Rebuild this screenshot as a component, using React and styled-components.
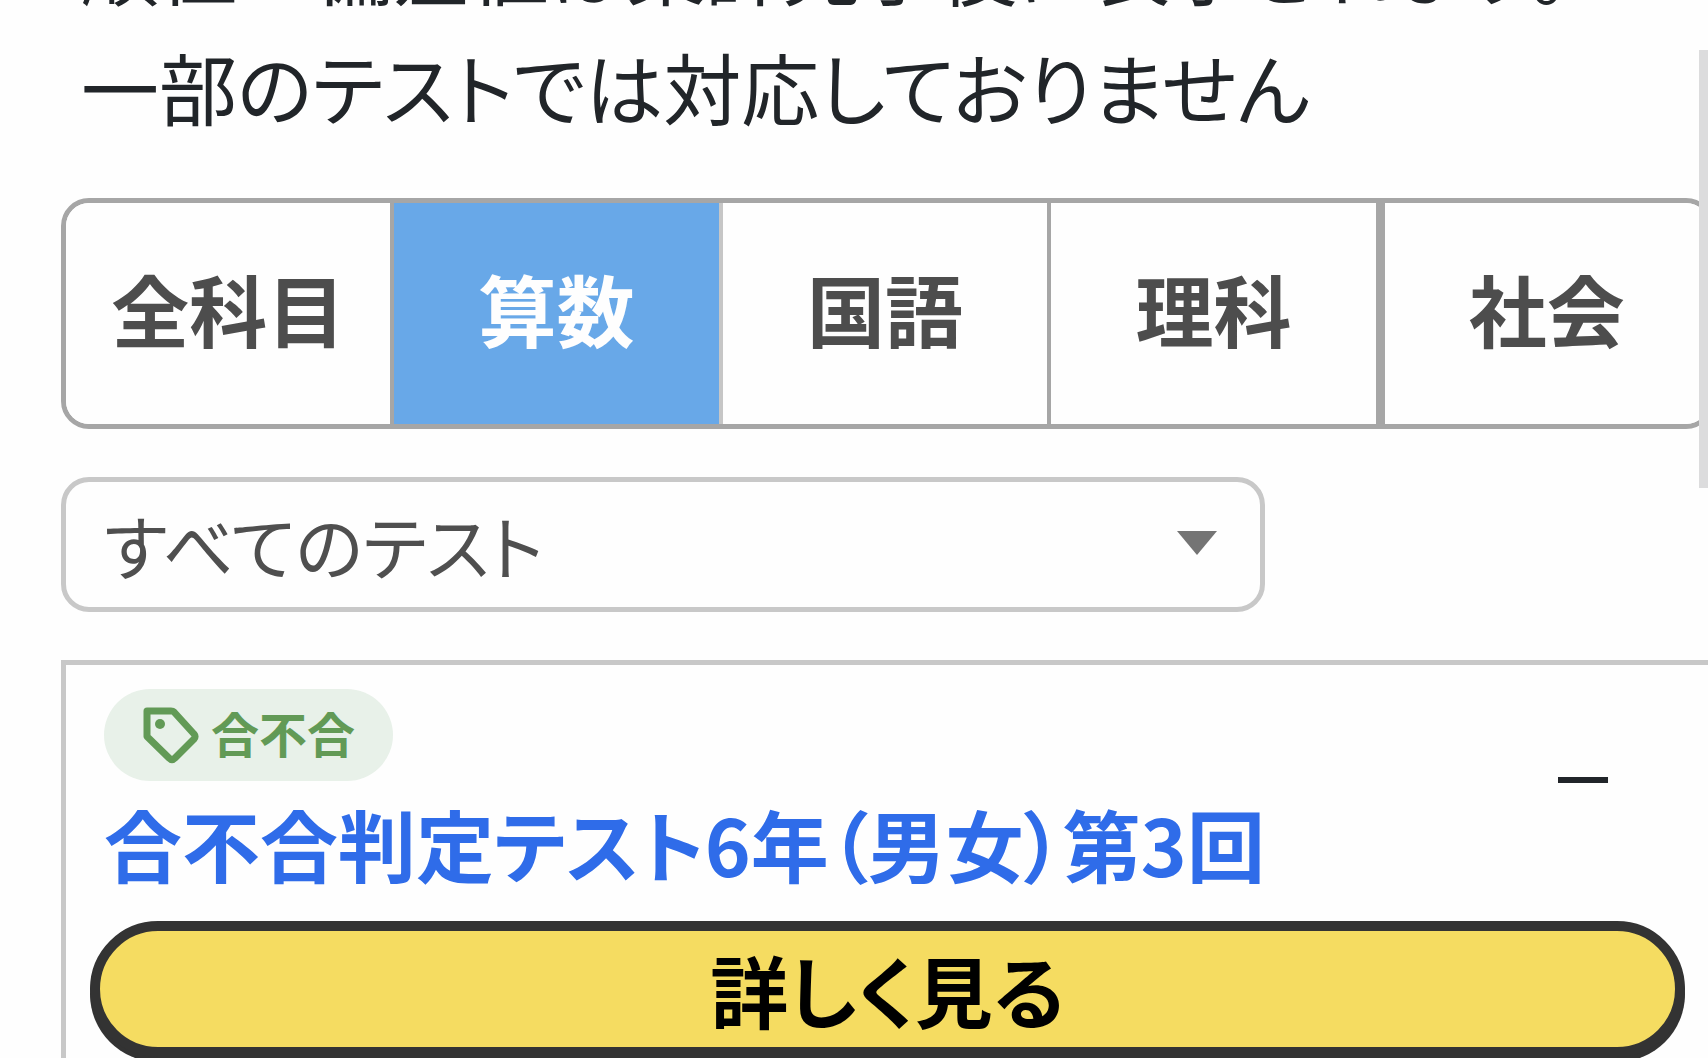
import { useState } from "react";
import styled, { createGlobalStyle, css } from "styled-components";

const GlobalStyle = createGlobalStyle`
  * {
    box-sizing: border-box;
  }

  body {
    margin: 0;
    background: #fefefe;
    color: #212529;
    font-family: "Noto Sans CJK JP", sans-serif;
    font-feature-settings: "palt";
    overflow: hidden;
  }

  button,
  select {
    font: inherit;
    font-feature-settings: inherit;
    cursor: pointer;
  }
`;

/* ----PAGE----- */
const Page = styled.main`
  height: 100vh;
  padding-left: 61px;
  overflow: hidden;
`;

/* the page is scrolled, so the notice starts above the fold */
const Notice = styled.p`
  margin: -94px 0 52px;
  padding: 0 20px;
  font-size: 78px;
  line-height: 120px;
`;

const FullWidth = styled.span`
  font-feature-settings: normal;
`;

const ScrollThumb = styled.div`
  position: fixed;
  top: 50px;
  right: 0;
  width: 9px;
  height: 438px;
  background: #dcdcdd;
`;

/* ----SUBJECT TABS----- */
const Tabs = styled.div`
  display: flex;
  height: 231px;
  margin-right: -6px;
  border: 5px solid #a6a6a6;
  border-radius: 28px;
  overflow: hidden;
`;

const Tab = styled.button`
  flex: 1 0 0;
  box-sizing: content-box;
  padding: 0 0 12px;
  border: 0;
  border-right: 4px solid #a6a6a6;
  background: #fefefe;
  color: #4d4d4d;
  font-size: 78px;
  font-weight: 700;
  line-height: 120px;

  ${({ $active }) =>
    $active &&
    css`
      background: #68a8e8;
      border-right-color: #c6c6c6;
      color: #fefefe;
    `}

  &:nth-child(4) {
    border-right-width: 9px;
  }

  &:last-child {
    border-right: 0;
  }
`;

/* ----TEST FILTER----- */
const Filter = styled.div`
  display: grid;
  align-items: center;
  width: 1204px;
  max-width: 100%;
  margin: 48px 0;
`;

const FilterSelect = styled.select`
  grid-area: 1 / 1;
  width: 100%;
  height: 135px;
  padding: 0 38px;
  appearance: none;
  border: 5px solid #c8c8c8;
  border-radius: 28px;
  background: #fefefe;
  color: #4f4f4f;
  font-size: 70px;
`;

const FilterArrow = styled.svg`
  grid-area: 1 / 1;
  justify-self: end;
  width: 40px;
  height: 24px;
  margin: 0 48px 4px 0;
  pointer-events: none;
`;

/* ----TEST CARD----- */
const Card = styled.section`
  padding: 24px 23px 24px 24px;
  border: 5px solid #c8c8c8;
  border-right: 0;
`;

const CardHead = styled.div`
  display: flex;
  align-items: center;
  justify-content: space-between;
  padding: 0 77px 0 14px;
`;

const CardInfo = styled.div`
  display: flex;
  flex-direction: column;
  align-items: flex-start;
  gap: 4px;
`;

const Badge = styled.span`
  display: inline-flex;
  align-items: center;
  gap: 11px;
  height: 92px;
  padding: 0 38px 0 39px;
  border-radius: 46px;
  background: #e8f1e9;
  color: #629a56;
  font-size: 48px;
  font-weight: 700;
`;

const BadgeText = styled.span`
  padding-bottom: 6px;
`;

const TagIcon = styled.svg`
  width: 57px;
  height: 57px;
`;

const Title = styled.a`
  color: #2f6ce9;
  font-size: 78px;
  font-weight: 700;
  line-height: 116px;
  text-decoration: none;
`;

const Score = styled.span`
  padding-bottom: 46px;
  font-family: "Liberation Sans", sans-serif;
  font-size: 90px;
  line-height: 120px;
`;

const DetailButton = styled.button`
  display: block;
  width: 100%;
  height: 136px;
  margin-top: 20px;
  padding: 0;
  border: 10px solid #333333;
  border-radius: 68px;
  background: #f5dc61;
  box-shadow: 0 5px 0 #333333;
  color: #000000;
  font-size: 78px;
  font-weight: 700;
  line-height: 116px;
`;

const subjects = ["全科目", "算数", "国語", "理科", "社会"];

const App = () => {
  const [subject, setSubject] = useState("算数");

  return (
    <Page>
      <GlobalStyle />
      <Notice>
        <FullWidth>順位・</FullWidth>偏差値は集計完了後に表示されます。※
        <br />
        一部のテストでは対応しておりません
      </Notice>

      <Tabs>
        {subjects.map((name) => (
          <Tab key={name} type="button" $active={name === subject} onClick={() => setSubject(name)}>
            {name}
          </Tab>
        ))}
      </Tabs>

      <Filter>
        <FilterSelect aria-label="テスト">
          <option>すべてのテスト</option>
        </FilterSelect>
        <FilterArrow viewBox="0 0 40 24" aria-hidden="true">
          <path d="M0 0h40L20 24z" fill="#747474" />
        </FilterArrow>
      </Filter>

      <Card>
        <CardHead>
          <CardInfo>
            <Badge>
              <TagIcon viewBox="0 0 57 57" aria-hidden="true">
                <path
                  d="M4 4H28Q30 4 31 5L51 27Q53 29.500 51 32L32 51Q29 54 26 51L4 29.500Z"
                  fill="none"
                  stroke="currentColor"
                  strokeWidth="7"
                  strokeLinejoin="round"
                />
                <circle cx="17" cy="17" r="5" fill="currentColor" />
              </TagIcon>
              <BadgeText>合不合</BadgeText>
            </Badge>
            <Title href="#">合不合判定テスト6年（男女）第3回</Title>
          </CardInfo>
          <Score>–</Score>
        </CardHead>
        <DetailButton type="button">詳しく見る</DetailButton>
      </Card>
      <ScrollThumb />
    </Page>
  );
};

export default App;
